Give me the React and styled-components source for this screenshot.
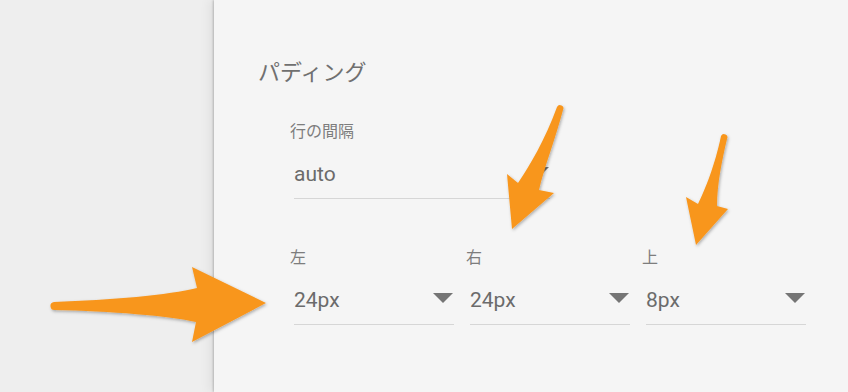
import React from "react";
import styled, { createGlobalStyle } from "styled-components";

const Global = createGlobalStyle`
  html, body { margin: 0; padding: 0; background: #eeeeee; }
  body { font-family: Roboto, "Noto Sans CJK JP", sans-serif; }
`;

const Page = styled.div`
  position: relative;
  display: flex;
  width: 848px;
  height: 392px;
  overflow: hidden;
  background: #eeeeee;
`;

const Side = styled.div`
  width: 214px;
  flex: none;
`;

const Panel = styled.div`
  flex: 1;
  background: #f5f5f5;
  box-shadow: -1px 0 2px rgba(0, 0, 0, 0.2), -5px 0 10px rgba(0, 0, 0, 0.06);
  padding: 59px 0 0 44px;
  display: flex;
  flex-direction: column;
`;

const Title = styled.div`
  font-size: 22px;
  line-height: 28px;
  color: #707070;
`;

const Rows = styled.div`
  display: flex;
  flex-direction: column;
  gap: 49px;
  margin: 35px 0 0 36px;
`;

const Row = styled.div`
  display: flex;
  gap: 16px;
`;

const Field = styled.div`
  width: ${(p) => p.$w}px;
  display: flex;
  flex-direction: column;
`;

const Label = styled.div`
  font-size: 16px;
  line-height: 20px;
  color: #7d7d7d;
  margin-left: -4px;
  margin-bottom: 18px;
`;

const Select = styled.div`
  display: flex;
  align-items: center;
  justify-content: space-between;
  padding-bottom: 10px;
  border-bottom: 1px solid #d6d6d6;
`;

const Value = styled.span`
  font-size: 21px;
  line-height: 28px;
  color: #6b6b6b;
`;

const Caret = styled.svg`
  width: 20px;
  height: 10px;
  margin: 0 1px 4px 0;
  flex: none;
`;

const Overlay = styled.svg`
  position: absolute;
  left: 0;
  top: 0;
  width: 848px;
  height: 392px;
  pointer-events: none;
`;

function Dropdown({ label, value, width }) {
  return (
    <Field $w={width}>
      <Label>{label}</Label>
      <Select>
        <Value>{value}</Value>
        <Caret viewBox="0 0 20 10">
          <polygon points="0,0 20,0 10,10" fill="#757575" />
        </Caret>
      </Select>
    </Field>
  );
}

export default function App() {
  return (
    <>
      <Global />
      <Page>
        <Side />
        <Panel>
          <Title>パディング</Title>
          <Rows>
            <Row>
              <Dropdown label="行の間隔" value="auto" width={256} />
            </Row>
            <Row>
              <Dropdown label="左" value="24px" width={160} />
              <Dropdown label="右" value="24px" width={160} />
              <Dropdown label="上" value="8px" width={160} />
            </Row>
          </Rows>
        </Panel>
        <Overlay viewBox="0 0 848 392">
          <defs>
            <filter id="sh" x="-20%" y="-20%" width="140%" height="140%">
              <feDropShadow dx="1" dy="1.5" stdDeviation="1.5" floodColor="#000" floodOpacity="0.3" />
            </filter>
          </defs>
          <g fill="#f8961e" filter="url(#sh)">
            <path d="M 54 302 C 110 300, 170 295, 197 288 L 192 267 L 266 303 L 192 342 L 196 322 C 170 316, 110 311, 55 310 A 4 4 0 0 1 54 302 Z" />
            <path d="M 563 110 C 555 140, 545 165, 539 190 L 554 193 L 512 229 L 507 174 L 518 183 C 530 165, 545 140, 557 107 A 3 3 0 0 1 563 110 Z" />
            <path d="M 727 139 C 722 160, 717 185, 717 206 L 728 209 L 696 245 L 686 197 L 698 204 C 705 190, 715 165, 721 136 A 3 3 0 0 1 727 139 Z" />
          </g>
        </Overlay>
      </Page>
    </>
  );
}
